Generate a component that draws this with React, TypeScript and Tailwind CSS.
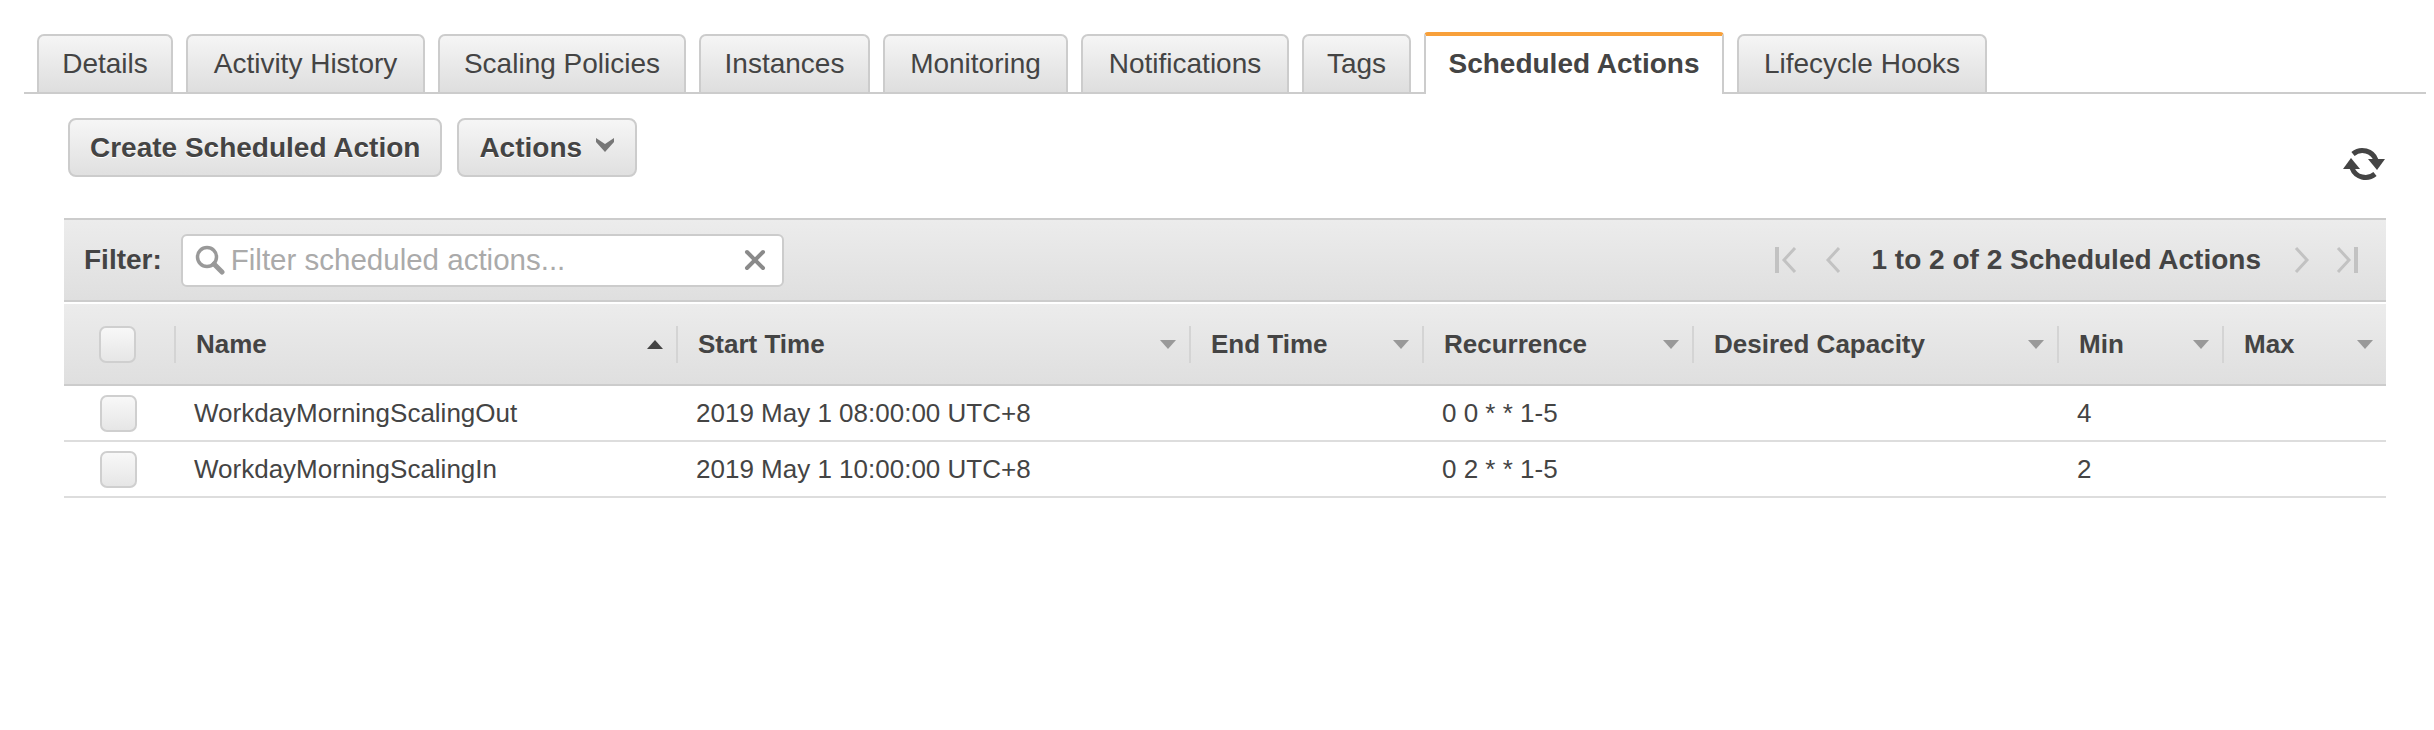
import { X } from 'lucide-react';

const tabs = [
    { label: 'Details', width: 'w-[136px]' },
    { label: 'Activity History', width: 'w-[239px]' },
    { label: 'Scaling Policies', width: 'w-[248px]' },
    { label: 'Instances', width: 'w-[171px]' },
    { label: 'Monitoring', width: 'w-[185px]' },
    { label: 'Notifications', width: 'w-[208px]' },
    { label: 'Tags', width: 'w-[109px]' },
    { label: 'Scheduled Actions', width: 'w-[300px]', active: true },
    { label: 'Lifecycle Hooks', width: 'w-[250px]' },
];

const columns = [
    { label: 'Name', sorted: true },
    { label: 'Start Time' },
    { label: 'End Time' },
    { label: 'Recurrence' },
    { label: 'Desired Capacity' },
    { label: 'Min' },
    { label: 'Max' },
];

const rows = [
    { name: 'WorkdayMorningScalingOut', start: '2019 May 1 08:00:00 UTC+8', recurrence: '0 0 * * 1-5', min: '4' },
    { name: 'WorkdayMorningScalingIn', start: '2019 May 1 10:00:00 UTC+8', recurrence: '0 2 * * 1-5', min: '2' },
];

const gridCols = 'grid grid-cols-[110px_502px_513px_233px_270px_365px_165px_164px]';

function Checkbox() {
    return <div className="h-[37px] w-[37px] rounded-[7px] border-2 border-[#cfcfcf] bg-gradient-to-b from-[#f8f8f8] to-[#e6e6e6]" />;
}

function RefreshIcon() {
    return (
        <svg width="44" height="38" viewBox="0 0 44 38" fill="none">
            <path d="M11 9 A 14.5 14.5 0 0 1 34 15" stroke="#444" strokeWidth="5" />
            <path d="M26 14 L43 14 L35 25 Z" fill="#444" />
            <path d="M33 29 A 14.5 14.5 0 0 1 10 23" stroke="#444" strokeWidth="5" />
            <path d="M1 24 L18 24 L9 13 Z" fill="#444" />
        </svg>
    );
}

function PagerIcon({ dir, bar }: { dir: 'left' | 'right'; bar?: boolean }) {
    const width = bar ? 22 : 16;
    const points = dir === 'left'
        ? (bar ? '20,1 9,13 20,25' : '14,1 3,13 14,25')
        : '2,1 13,13 2,25';
    return (
        <svg width={width} height="26" viewBox={`0 0 ${width} 26`} fill="none">
            <polyline points={points} stroke="#c2c2c2" strokeWidth="3" />
            {bar && <rect x={dir === 'left' ? 0 : 18} y="0" width="4" height="26" fill="#c2c2c2" />}
        </svg>
    );
}

export default function App() {
    return (
        <div className="h-[730px] bg-white pt-[32px] font-['Liberation_Sans',sans-serif] text-[#444]">
            {/* Tabs */}
            <div className="ml-[24px] mr-[8px] flex h-[62px] items-end gap-[13px] border-b-2 border-[#ccc] pl-[13px]">
                {tabs.map((tab) => tab.active ? (
                    <div key={tab.label} className={`${tab.width} relative z-10 -mb-[2px] flex h-[62px] items-center justify-center rounded-t-[4px] border-x-2 border-t-4 border-x-[#ccc] border-t-[#f8a03a] bg-white pb-[2px] text-[28px] font-bold`}>
                        {tab.label}
                    </div>
                ) : (
                    <div key={tab.label} className={`${tab.width} flex h-[58px] items-center justify-center rounded-t-[7px] border-x-2 border-t-2 border-[#ccc] bg-gradient-to-b from-[#f5f5f5] to-[#dedede] text-[28px]`}>
                        {tab.label}
                    </div>
                ))}
            </div>

            {/* Buttons */}
            <div className="ml-[68px] mr-[48px] mt-[24px] flex h-[100px] items-start justify-between">
                <div className="flex gap-[15px]">
                    <div className="flex h-[59px] items-center rounded-[8px] border-2 border-[#ccc] bg-gradient-to-b from-[#f6f6f6] to-[#e0e0e0] px-[20px] text-[28px] font-bold [text-shadow:0_1px_0_#fff]">
                        Create Scheduled Action
                    </div>
                    <div className="flex h-[59px] items-center gap-[14px] rounded-[8px] border-2 border-[#ccc] bg-gradient-to-b from-[#f6f6f6] to-[#e0e0e0] pl-[20px] pr-[21px] text-[28px] font-bold [text-shadow:0_1px_0_#fff]">
                        Actions
                        <svg width="18" height="14" viewBox="0 0 18 14" className="-mt-[6px]">
                            <path d="M0 0 L9 6 L18 0 L18 4 L9 14 L0 4 Z" fill="#777" />
                        </svg>
                    </div>
                </div>
                <div className="mt-[27px]">
                    <RefreshIcon />
                </div>
            </div>

            {/* Filter bar */}
            <div className="ml-[64px] mr-[48px] flex h-[84px] items-center border-y-2 border-[#ccc] bg-gradient-to-b from-[#ececec] to-[#dfdfdf] pl-[20px] pr-[28px]">
                <span className="text-[28px] font-bold">Filter:</span>
                <div className="ml-[19px] flex h-[53px] w-[603px] items-center rounded-[6px] border-2 border-[#ccc] bg-white pl-[12px] pr-[11px]">
                    <svg width="30" height="30" viewBox="0 0 30 30" fill="none">
                        <circle cx="12" cy="12" r="9.5" stroke="#999" strokeWidth="3.5" />
                        <path d="M19 19 L27 27" stroke="#999" strokeWidth="5" strokeLinecap="round" />
                    </svg>
                    <span className="ml-[6px] flex-1 text-[29.5px] text-[#aaa]">Filter scheduled actions...</span>
                    <X size={32} strokeWidth={3} color="#8a8a8a" />
                </div>
                <div className="ml-auto flex items-center">
                    <PagerIcon dir="left" bar />
                    <span className="ml-[28px]"><PagerIcon dir="left" /></span>
                    <span className="ml-[31px] mr-[33px] text-[28px] font-bold">1 to 2 of 2 Scheduled Actions</span>
                    <PagerIcon dir="right" />
                    <span className="ml-[26px]"><PagerIcon dir="right" bar /></span>
                </div>
            </div>

            {/* Table */}
            <div className="ml-[64px] mr-[48px] mt-[2px]">
                <div className={`${gridCols} h-[82px] items-center border-b-2 border-[#ccc] bg-gradient-to-b from-[#ececec] to-[#dfdfdf]`}>
                    <div className="pl-[35px]"><Checkbox /></div>
                    {columns.map((col) => (
                        <div key={col.label} className="flex h-[37px] items-center justify-between border-l-2 border-[#d4d4d4] pl-[20px] pr-[13px] text-[26px] font-bold">
                            {col.label}
                            <svg width="16" height="9" viewBox="0 0 16 9" className={col.sorted ? 'rotate-180' : ''}>
                                <path d="M0 0 L16 0 L8 9 Z" fill={col.sorted ? '#444' : '#999'} />
                            </svg>
                        </div>
                    ))}
                </div>
                {rows.map((row) => (
                    <div key={row.name} className={`${gridCols} h-[56px] items-center border-b-2 border-[#ddd] text-[26px]`}>
                        <div className="pl-[36px]"><Checkbox /></div>
                        <div className="pl-[20px]">{row.name}</div>
                        <div className="pl-[20px]">{row.start}</div>
                        <div />
                        <div className="pl-[20px]">{row.recurrence}</div>
                        <div />
                        <div className="pl-[20px]">{row.min}</div>
                        <div />
                    </div>
                ))}
            </div>
        </div>
    );
}
